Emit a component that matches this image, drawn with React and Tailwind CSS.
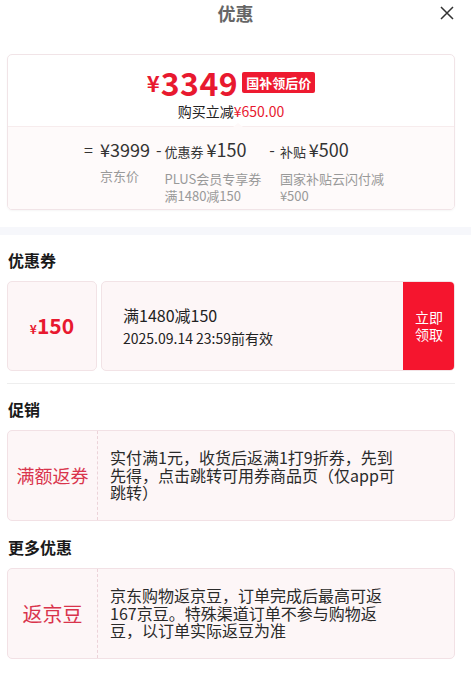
import React from "react";

const font = { fontFamily: '"Noto Sans CJK SC", "Noto Sans", sans-serif' };

function Heading({ children, className = "" }) {
  return (
    <div className={"px-2 text-[16px] leading-[22px] font-bold text-[#1a1a1a] " + className}>{children}</div>
  );
}

function InfoCard({ label, labelSize, lines }) {
  return (
    <div className="ml-[7px] mr-[16px] mt-[10px] flex h-[91px] rounded-[5px] border border-[#f2e1e5] bg-[#fdf6f7]">
      <div className="flex w-[90px] shrink-0 items-center justify-center border-r border-dashed border-[#ecd3d9]">
        <span className={"text-[#d9344c] " + labelSize}>{label}</span>
      </div>
      <div className="flex items-center pl-[12px]">
        <div className="w-[292px] text-[16px] leading-[17.5px] text-[#2a2a2a]">{lines}</div>
      </div>
    </div>
  );
}

export default function App() {
  return (
    <div className="w-[471px] h-[690px] bg-white" style={font}>
      {/* header */}
      <div className="relative flex h-[26px] items-center justify-center">
        <span className="text-[18px] font-bold leading-[26px] text-[#666]">优惠</span>
        <svg className="absolute right-[17px] top-[6px]" width="14" height="14" viewBox="0 0 14 14">
          <path d="M1 1L13 13M13 1L1 13" stroke="#333" strokeWidth="1.5" fill="none" />
        </svg>
      </div>

      {/* price card */}
      <div className="ml-[7px] mr-[16px] mt-[28px] h-[156px] overflow-hidden rounded-[5px] border border-[#f1e4e7] shadow-[0_1px_2px_rgba(0,0,0,0.04)]">
        <div className="relative flex h-[72px] flex-col items-center pt-[11px]">
          <div className="flex items-center">
            <span className="text-[#e8192f] text-[22px] font-bold leading-[32px] mr-[1px]">¥</span>
            <span className="text-[#e8192f] text-[32px] font-bold leading-[32px] tracking-[0.5px]">3349</span>
            <span className="ml-[4px] rounded-[2px] bg-[#ee1a30] px-[4px] text-[13px] font-bold leading-[21px] text-white">国补领后价</span>
          </div>
          <div className="mt-[3px] text-[14px] leading-[20px] text-[#222]">
            购买立减<span className="text-[#e8192f]">¥650.00</span>
          </div>
          <div className="absolute bottom-0 left-0 right-0 h-px bg-[#f7eced]"></div>
          <div className="absolute bottom-0 left-[225px] h-0 w-0 border-x-[5px] border-b-[4px] border-x-transparent border-b-[#fef9f9]"></div>
        </div>
        <div className="flex h-[84px] justify-center bg-[#fefafa] pt-[10px] pl-[6px] text-[#333]">
          <div className="flex">
            <span className="mr-[7px] text-[16px] leading-[24px]">=</span>
            <div>
              <div className="text-[18px] leading-[24px]">¥3999</div>
              <div className="mt-[6px] text-[13px] leading-[17px] text-[#999]">京东价</div>
            </div>
          </div>
          <div className="ml-[6px] flex">
            <span className="mr-[3px] text-[16px] leading-[24px]">-</span>
            <div>
              <div className="leading-[24px]"><span className="text-[13px]">优惠券 </span><span className="text-[18px]">¥150</span></div>
              <div className="mt-[6px] text-[13px] leading-[17px] text-[#999]">PLUS会员专享券<br />满1480减150</div>
            </div>
          </div>
          <div className="ml-[8px] flex">
            <span className="mr-[5px] text-[16px] leading-[24px]">-</span>
            <div>
              <div className="leading-[24px]"><span className="text-[13px]">补贴 </span><span className="text-[18px]">¥500</span></div>
              <div className="mt-[6px] text-[13px] leading-[17px] text-[#999]">国家补贴云闪付减<br />¥500</div>
            </div>
          </div>
        </div>
      </div>

      {/* gray band */}
      <div className="mt-[17px] h-[8px] bg-[#f6f7fb]"></div>

      {/* coupon */}
      <Heading className="mt-[14px]">优惠券</Heading>
      <div className="ml-[7px] mr-[16px] mt-[10px] flex h-[90px] gap-[4px]">
        <div className="relative flex w-[90px] items-center justify-center rounded-[5px] border border-[#f2e3e6] bg-[#fdf6f7]">
          <span className="text-[#e8192f] font-bold"><span className="text-[12px]">¥</span><span className="text-[21px]">150</span></span>
          <div className="absolute -right-[5px] -top-[4px] h-[6px] w-[6px] rounded-full bg-white"></div>
          <div className="absolute -right-[5px] -bottom-[4px] h-[6px] w-[6px] rounded-full bg-white"></div>
        </div>
        <div className="flex flex-1 overflow-hidden rounded-[5px] border border-[#f2e3e6] bg-[#fdf6f7]">
          <div className="flex flex-1 flex-col justify-center pl-[21px] text-[#222]">
            <div className="text-[16px] leading-[22px]">满1480减150</div>
            <div className="mt-[2px] text-[14px] leading-[20px]">2025.09.14 23:59前有效</div>
          </div>
          <div className="-my-px -mr-px flex w-[52px] items-center justify-center bg-[#f5152e] text-center text-[14px] leading-[17px] text-white">
            立即<br />领取
          </div>
        </div>
      </div>
      <div className="ml-[7px] mr-[16px] mt-[12px] h-px bg-[#eeeeee]"></div>

      {/* promo */}
      <Heading className="mt-[14px]">促销</Heading>
      <InfoCard
        label="满额返券"
        labelSize="text-[18px]"
        lines={<>实付满1元，收货后返满1打9折券，先到先得，点击跳转可用券商品页（仅app可跳转）</>}
      />

      {/* more */}
      <Heading className="mt-[15px]">更多优惠</Heading>
      <InfoCard
        label="返京豆"
        labelSize="text-[20px]"
        lines={<>京东购物返京豆，订单完成后最高可返167京豆。特殊渠道订单不参与购物返豆，以订单实际返豆为准</>}
      />
    </div>
  );
}
